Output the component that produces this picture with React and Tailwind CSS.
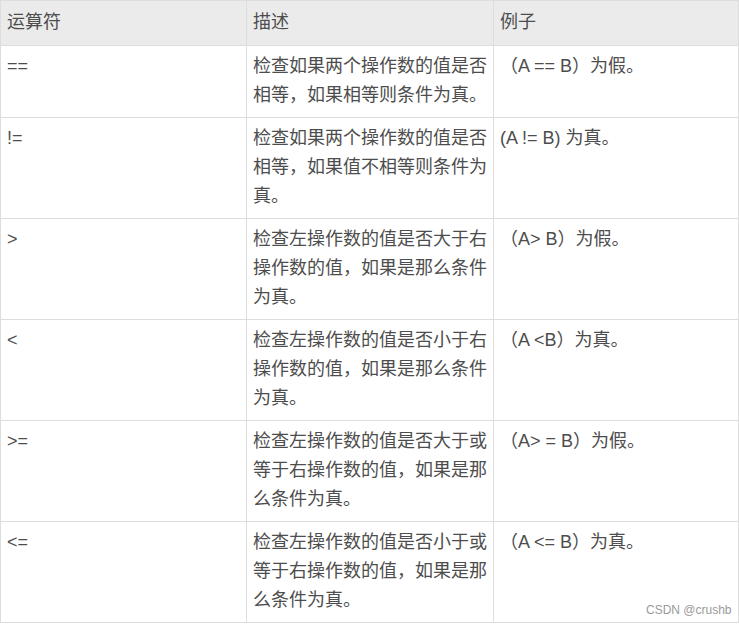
const rows = [
  { op: "==", desc: "检查如果两个操作数的值是否相等，如果相等则条件为真。", ex: "（A == B）为假。" },
  { op: "!=", desc: "检查如果两个操作数的值是否相等，如果值不相等则条件为真。", ex: "(A != B) 为真。" },
  { op: ">", desc: "检查左操作数的值是否大于右操作数的值，如果是那么条件为真。", ex: "（A> B）为假。" },
  { op: "<", desc: "检查左操作数的值是否小于右操作数的值，如果是那么条件为真。", ex: "（A <B）为真。" },
  { op: ">=", desc: "检查左操作数的值是否大于或等于右操作数的值，如果是那么条件为真。", ex: "（A> = B）为假。" },
  { op: "<=", desc: "检查左操作数的值是否小于或等于右操作数的值，如果是那么条件为真。", ex: "（A <= B）为真。" },
];

function App() {
  const cell = "border border-[#dddddd] pl-[6px] pr-[4px] pt-[6px] pb-[7px] align-top";
  const head = "border border-[#dddddd] pl-[6px] pr-[4px] pt-[7px] pb-[8px] align-top font-normal text-left";

  return (
    <div
      className="relative w-[739px] h-[625px] bg-white text-[#4d4d4d] text-[18px] leading-[29px]"
      style={{ fontFamily: '"Liberation Sans", "Noto Sans CJK SC", sans-serif' }}
    >
      <table className="w-[738px] table-fixed border-collapse">
        <colgroup>
          <col className="w-[246px]" />
          <col className="w-[247px]" />
          <col className="w-[245px]" />
        </colgroup>
        <thead>
          <tr className="bg-[#ebebeb]">
            <th className={head}>运算符</th>
            <th className={head}>描述</th>
            <th className={head}>例子</th>
          </tr>
        </thead>
        <tbody>
          {rows.map((r) => (
            <tr key={r.op}>
              <td className={cell}>{r.op}</td>
              <td className={cell}>{r.desc}</td>
              <td className={cell}>{r.ex}</td>
            </tr>
          ))}
        </tbody>
      </table>

      {/* watermark over the last cell */}
      <span className="absolute left-[646px] top-[603px] text-[12px] leading-[14px] text-[#9a9a9a]">
        CSDN @crushb
      </span>
    </div>
  );
}

export default App;
